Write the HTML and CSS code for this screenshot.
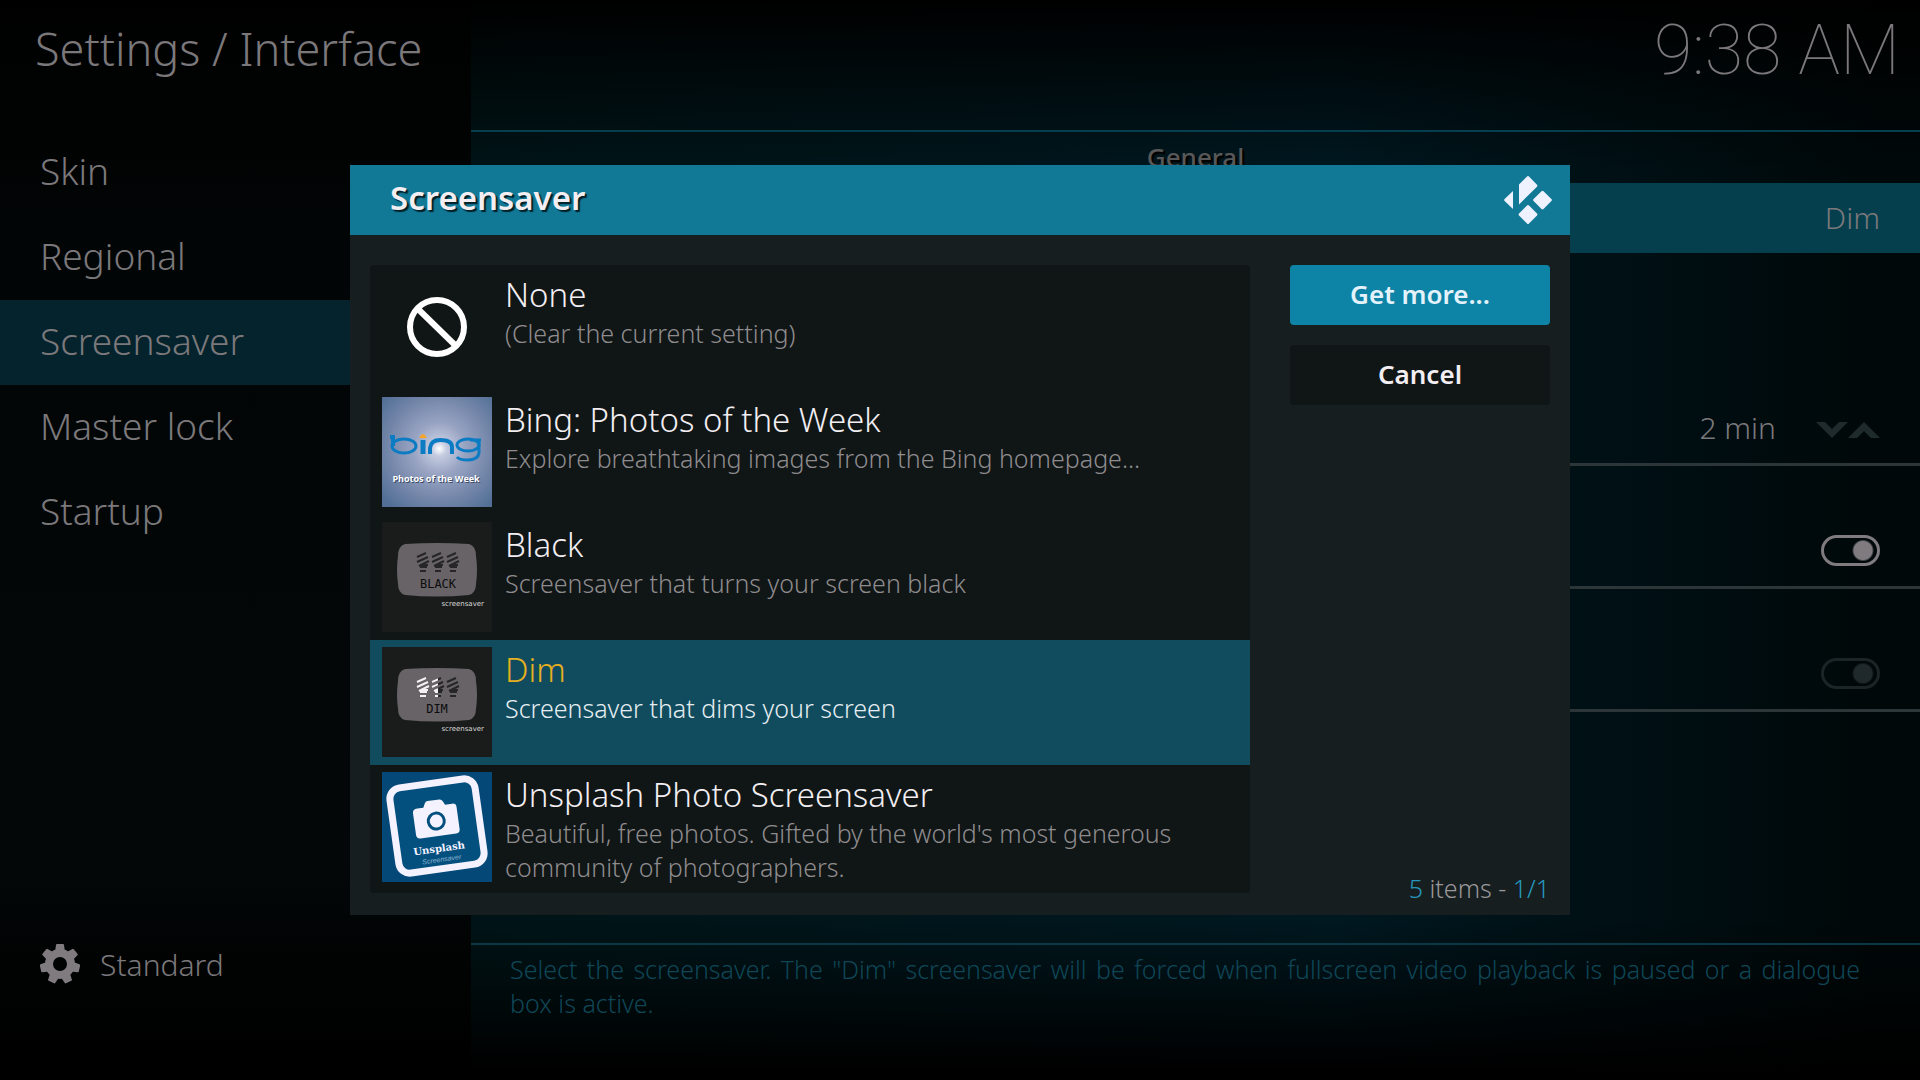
FILE: index.html
```html
<!DOCTYPE html>
<html lang="en">

<head>
  <title>Settings / Interface</title>
  <meta charset="UTF-8">
  <meta name="viewport" content="width=device-width, initial-scale=1">
  <link rel="stylesheet" href="styles.css">
</head>

<body>
  <aside class="sidebar">
    <h1 class="page-title">Settings / Interface</h1>
    <nav class="menu">
      <a href="#skin">Skin</a>
      <a href="#regional">Regional</a>
      <a href="#screensaver" class="active">Screensaver</a>
      <a href="#masterlock">Master lock</a>
      <a href="#startup">Startup</a>
    </nav>
    <button class="level">
      <svg width="40" height="40" viewBox="-20 -20 40 40">
        <g fill="#7f7b7f">
          <g id="tooth"><path d="M-5 -12L-4 -19Q-4 -20 -3 -20H3Q4 -20 4 -19L5 -12z" /></g>
          <use href="#tooth" transform="rotate(51.4)" />
          <use href="#tooth" transform="rotate(102.9)" />
          <use href="#tooth" transform="rotate(154.3)" />
          <use href="#tooth" transform="rotate(205.7)" />
          <use href="#tooth" transform="rotate(257.1)" />
          <use href="#tooth" transform="rotate(308.6)" />
        </g>
        <circle r="11" fill="none" stroke="#7f7b7f" stroke-width="8" />
      </svg>
      Standard
    </button>
  </aside>

  <main class="content">
    <header class="topbar"><time class="clock">9:38 AM</time></header>
    <div class="settings">
      <section class="group general">
        <h2>General</h2>
        <button class="row focused">Dim</button>
      </section>
      <section class="group">
        <div class="row lined">
          <span>2 min</span>
          <span class="spinner">
            <button aria-label="Decrease"><svg width="32" height="16" viewBox="0 0 32 16"><path d="M0 0H9L16 7L23 0H32L16 16z" /></svg></button>
            <button aria-label="Increase"><svg width="32" height="16" viewBox="0 0 32 16"><path d="M0 16H9L16 9L23 16H32L16 0z" /></svg></button>
          </span>
        </div>
      </section>
      <section class="group">
        <label class="row lined"><input type="checkbox" class="toggle" aria-label="Use visualisation" checked></label>
      </section>
      <section class="group">
        <label class="row lined"><input type="checkbox" class="toggle" aria-label="Use dim" checked disabled></label>
      </section>
    </div>
    <p class="help">Select the screensaver. The "Dim" screensaver will be forced when fullscreen video playback is paused or a dialogue box&nbsp;is active.</p>
  </main>

  <div class="overlay">
    <div class="dialog" role="dialog" aria-labelledby="dialog-title">
      <header class="dialog-header">
        <h2 id="dialog-title">Screensaver</h2>
        <svg width="48" height="48" viewBox="0 0 48 48" fill="#eef2ff">
          <path d="M15 8.500L23 .6Q24 -.4 25 .6L33 8.800Q33.800 9.800 33 10.700L15 28.500z" />
          <path d="M9 15V33L.6 25Q-.4 24 .6 23z" />
          <path d="M37.500 15.200Q38.500 14.300 39.500 15.200L47.400 23Q48.400 24 47.400 25L39.500 33Q38.500 33.900 37.500 33L29.600 25Q28.600 24 29.600 23z" />
          <path d="M23 29.600Q24 28.600 25 29.600L33 37.600Q33.900 38.500 33 39.400L25 47.400Q24 48.400 23 47.400L15 39.400Q14.100 38.500 15 37.600z" />
        </svg>
      </header>

      <div class="dialog-body">
        <ul class="list">
          <li>
            <button class="item">
              <svg class="thumb" viewBox="0 0 110 110" fill="none" stroke="#fff" stroke-width="6">
                <circle cx="55" cy="55" r="27" />
                <path d="M35 36L75 75" />
              </svg>
              <span class="text"><span class="name">None</span><span class="desc">(Clear the current setting)</span></span>
            </button>
          </li>
          <li>
            <button class="item">
              <svg class="thumb" viewBox="0 0 110 110">
                <defs>
                  <radialGradient id="glow" cx="52%" cy="47%" r="68%">
                    <stop offset="0" stop-color="#fff" />
                    <stop offset=".1" stop-color="#c4cbe0" />
                    <stop offset=".35" stop-color="#98a3c2" />
                    <stop offset=".7" stop-color="#7285a8" />
                    <stop offset="1" stop-color="#526f96" />
                  </radialGradient>
                </defs>
                <rect width="110" height="110" fill="url(#glow)" />
                <g fill="none" stroke="#0b7cc4">
                  <path d="M8 40H11V49" stroke-width="4" />
                  <ellipse cx="22" cy="49" rx="12" ry="7" stroke-width="3" />
                  <path d="M41 43V57" stroke-width="5" />
                  <path d="M48 57V51Q49 43 58 43Q70 43 70 50V57" stroke-width="4" />
                  <ellipse cx="86" cy="48" rx="11" ry="6" stroke-width="3" />
                  <path d="M88 43H99M97 44V56Q96 63 86 63Q77 63 75 60" stroke-width="3" />
                </g>
                <path d="M37 41L39 38L41 37L43 38L45 41z" fill="#f5a52a" />
                <text class="bing-shadow" x="55" y="86" text-anchor="middle">Photos of the Week</text>
                <text class="bing-sub" x="54" y="85" text-anchor="middle">Photos of the Week</text>
              </svg>
              <span class="text"><span class="name">Bing: Photos of the Week</span><span class="desc">Explore breathtaking images from the Bing homepage...</span></span>
            </button>
          </li>
          <li>
            <button class="item">
              <svg class="thumb" viewBox="0 0 110 110">
                <defs>
                  <g id="bulb" fill="none" stroke-width="2">
                    <path d="M0 4L9 0M0 9L11 4M2 13L12 8" />
                    <path d="M4 12H11M3 14H10M3 18H9" />
                  </g>
                  <path id="screen" d="M23 22Q55 20 87 22Q94 24 94 34Q96 48 94 62Q94 71 87 73Q55 76 23 73Q16 71 16 62Q14 48 16 34Q16 24 23 22z" />
                </defs>
                <rect width="110" height="110" fill="#1a1c1b" />
                <use href="#screen" fill="#676367" />
                <g stroke="#262626">
                  <use href="#bulb" x="35" y="31" />
                  <use href="#bulb" x="50" y="31" />
                  <use href="#bulb" x="65" y="31" />
                </g>
                <text class="lcd" x="56" y="66" text-anchor="middle">BLACK</text>
                <text class="saver" x="102" y="84" text-anchor="end">screensaver</text>
              </svg>
              <span class="text"><span class="name">Black</span><span class="desc">Screensaver that turns your screen black</span></span>
            </button>
          </li>
          <li>
            <button class="item selected">
              <svg class="thumb" viewBox="0 0 110 110">
                <defs>
                  <clipPath id="lit"><rect x="30" y="28" width="26" height="24" /></clipPath>
                </defs>
                <rect width="110" height="110" fill="#1a1c1b" />
                <use href="#screen" fill="#676367" />
                <g stroke="#262626">
                  <use href="#bulb" x="50" y="31" />
                  <use href="#bulb" x="65" y="31" />
                </g>
                <g stroke="#f4f0f4" clip-path="url(#lit)">
                  <use href="#bulb" x="35" y="31" />
                  <use href="#bulb" x="50" y="31" />
                </g>
                <text class="lcd" x="55" y="66" text-anchor="middle">DIM</text>
                <text class="saver" x="102" y="84" text-anchor="end">screensaver</text>
              </svg>
              <span class="text"><span class="name">Dim</span><span class="desc">Screensaver that dims your screen</span></span>
            </button>
          </li>
          <li>
            <button class="item">
              <svg class="thumb" viewBox="0 0 110 110">
                <rect width="110" height="110" fill="#044878" />
                <g transform="rotate(-8 55 54)">
                  <rect x="12" y="11" width="86" height="86" rx="11" fill="#03507f" stroke="#f4f2ff" stroke-width="7" />
                  <path d="M38 34H44L46 30Q47 28 49 28H61Q63 28 64 30L66 34H73Q77 34 77 38V60Q77 64 73 64H37Q33 64 33 60V38Q33 34 38 34z" fill="#f4f2ff" />
                  <circle cx="55" cy="49" r="8" fill="none" stroke="#03507f" stroke-width="3" />
                  <text class="brand" x="54" y="80" text-anchor="middle">Unsplash</text>
                  <text class="brand-sub" x="55" y="90" text-anchor="middle">Screensaver</text>
                </g>
              </svg>
              <span class="text"><span class="name">Unsplash Photo Screensaver</span><span class="desc">Beautiful, free photos. Gifted by the world's most generous community of photographers.</span></span>
            </button>
          </li>
        </ul>

        <div class="actions">
          <button class="btn primary">Get more...</button>
          <button class="btn">Cancel</button>
          <p class="count"><b>5</b> items - <b>1/1</b></p>
        </div>
      </div>
    </div>
  </div>
</body>

</html>
```

FILE: styles.css
```css
* {
  box-sizing: border-box;
}

body {
  margin: 0;
  min-height: 100vh;
  display: flex;
  background: #000;
  color: #7b787b;
  font-family: "Noto Sans", sans-serif;
  font-size: 30px;
  font-weight: 300;
}

h1, h2, p, ul {
  margin: 0;
  padding: 0;
  font-weight: 300;
}

ul {
  list-style: none;
}

a {
  color: inherit;
  text-decoration: none;
}

button {
  margin: 0;
  padding: 0;
  border: 0;
  background: none;
  color: inherit;
  font: inherit;
}

svg {
  display: block;
  flex: none;
}

/* left column */
.sidebar {
  width: 471px;
  flex: none;
  display: flex;
  flex-direction: column;
  background: linear-gradient(#000, #020505 20%, #030707 80%, #000 97%);
}

.page-title {
  height: 130px;
  padding: 18px 35px;
  font-size: 45px;
  line-height: 62px;
}

.menu a {
  display: block;
  height: 85px;
  padding-left: 40px;
  font-size: 37px;
  line-height: 82px;
}

.menu .active {
  background: #05232c;
}

.level {
  display: flex;
  align-items: center;
  gap: 20px;
  margin-top: auto;
  margin-bottom: 86px;
  padding-left: 40px;
  height: 60px;
}

/* right column */
.content {
  flex: 1;
  display: flex;
  flex-direction: column;
  background:
    linear-gradient(#000, transparent 16%, transparent 85%, #000 99%),
    linear-gradient(90deg, #001417, #001820 60%, #000809 97%);
}

.topbar {
  height: 132px;
  border-bottom: 2px solid #053f4e;
  padding: 9px 20px;
  text-align: right;
}

.clock {
  font-family: Roboto, sans-serif;
  font-size: 70px;
  font-weight: 100;
  line-height: 82px;
}

.settings {
  flex: 1;
}

.group {
  padding-top: 50px;
}

.general {
  padding-top: 0;
  margin-bottom: 90px;
}

.group h2 {
  height: 51px;
  color: #585858;
  font-size: 26px;
  font-weight: 500;
  line-height: 50px;
  text-align: center;
  text-shadow: 2px 2px 1px #000;
}

.row {
  width: 100%;
  height: 70px;
  padding: 0 40px 2px;
  display: flex;
  align-items: center;
  justify-content: flex-end;
  gap: 40px;
}

.focused {
  background: #053f4e;
}

.lined {
  height: 73px;
  border-bottom: 3px solid #2c3538;
}

.spinner {
  display: flex;
  padding-top: 6px;
  fill: #1f2a2c;
}

.toggle {
  appearance: none;
  margin: 0;
  width: 59px;
  height: 31px;
  border: 3px solid #7f7b7f;
  border-radius: 16px;
  background: radial-gradient(circle at 39px 50%, #7f7b7f 9px, transparent 11px);
}

.toggle:disabled {
  border-color: #1b2427;
  background: radial-gradient(circle at 39px 50%, #1f282a 9px, transparent 11px);
}

.help {
  height: 137px;
  padding: 7px 60px 0 39px;
  border-top: 2px solid #0b3845;
  color: #0f4657;
  font-size: 25px;
  font-weight: 350;
  line-height: 34px;
  text-align: justify;
}

/* select dialog */
.overlay {
  position: fixed;
  inset: 0;
  display: flex;
  align-items: center;
  justify-content: center;
}

.dialog {
  width: 1220px;
  background: #161e20;
  color: #f2eef2;
}

.dialog-header {
  height: 70px;
  padding: 0 18px 0 40px;
  display: flex;
  align-items: center;
  justify-content: space-between;
  background: #117896;
}

.dialog-header h2 {
  padding-bottom: 5px;
  font-size: 33px;
  font-weight: 600;
  text-shadow: 2px 2px 1px #022028;
}

.dialog-body {
  display: flex;
  justify-content: space-between;
  padding: 30px 20px 0;
}

.list {
  width: 880px;
  padding-bottom: 3px;
  margin-bottom: 22px;
  background: #101516;
  border-radius: 4px;
}

.item {
  width: 100%;
  height: 125px;
  padding: 7px 12px;
  display: flex;
  gap: 13px;
  text-align: left;
}

.selected {
  background: #114c5e;
}

.thumb {
  width: 110px;
  height: 110px;
}

.text {
  flex: 1;
}

.name,
.desc {
  display: block;
}

.name {
  font-size: 33px;
  line-height: 46px;
}

.desc {
  margin-top: -2px;
  color: #8f8c8e;
  font-size: 25px;
  font-weight: 350;
  line-height: 34px;
}

.selected .name {
  color: #e6b01e;
}

.selected .desc {
  color: #e6eef2;
}

.actions {
  width: 260px;
  display: flex;
  flex-direction: column;
  gap: 20px;
}

.btn {
  height: 60px;
  padding-bottom: 2px;
  background: #101516;
  border-radius: 4px;
  font-size: 26px;
  font-weight: 600;
}

.primary {
  background: #0d83a6;
  color: #e4f2fb;
}

.count {
  margin-top: auto;
  padding-bottom: 9px;
  color: #9a979a;
  font-size: 25px;
  font-weight: 350;
  line-height: 36px;
  text-align: right;
}

.count b {
  color: #2698bd;
  font-weight: 350;
}

/* lettering inside the thumbnails */
.bing-sub,
.bing-shadow {
  font: 700 9px "Open Sans", sans-serif;
  fill: #fff;
}

.bing-shadow {
  fill: #3b4a66;
}

.lcd {
  font: 400 12px "DejaVu Sans Mono", monospace;
  fill: #0c0c0c;
}

.saver {
  font: 400 7px "DejaVu Sans", sans-serif;
  fill: #d8d8d8;
}

.brand {
  font: 700 10px "DejaVu Serif", serif;
  fill: #f4f2ff;
}

.brand-sub {
  font: italic 400 7px "Liberation Sans", sans-serif;
  fill: #8fb4cf;
}
```
